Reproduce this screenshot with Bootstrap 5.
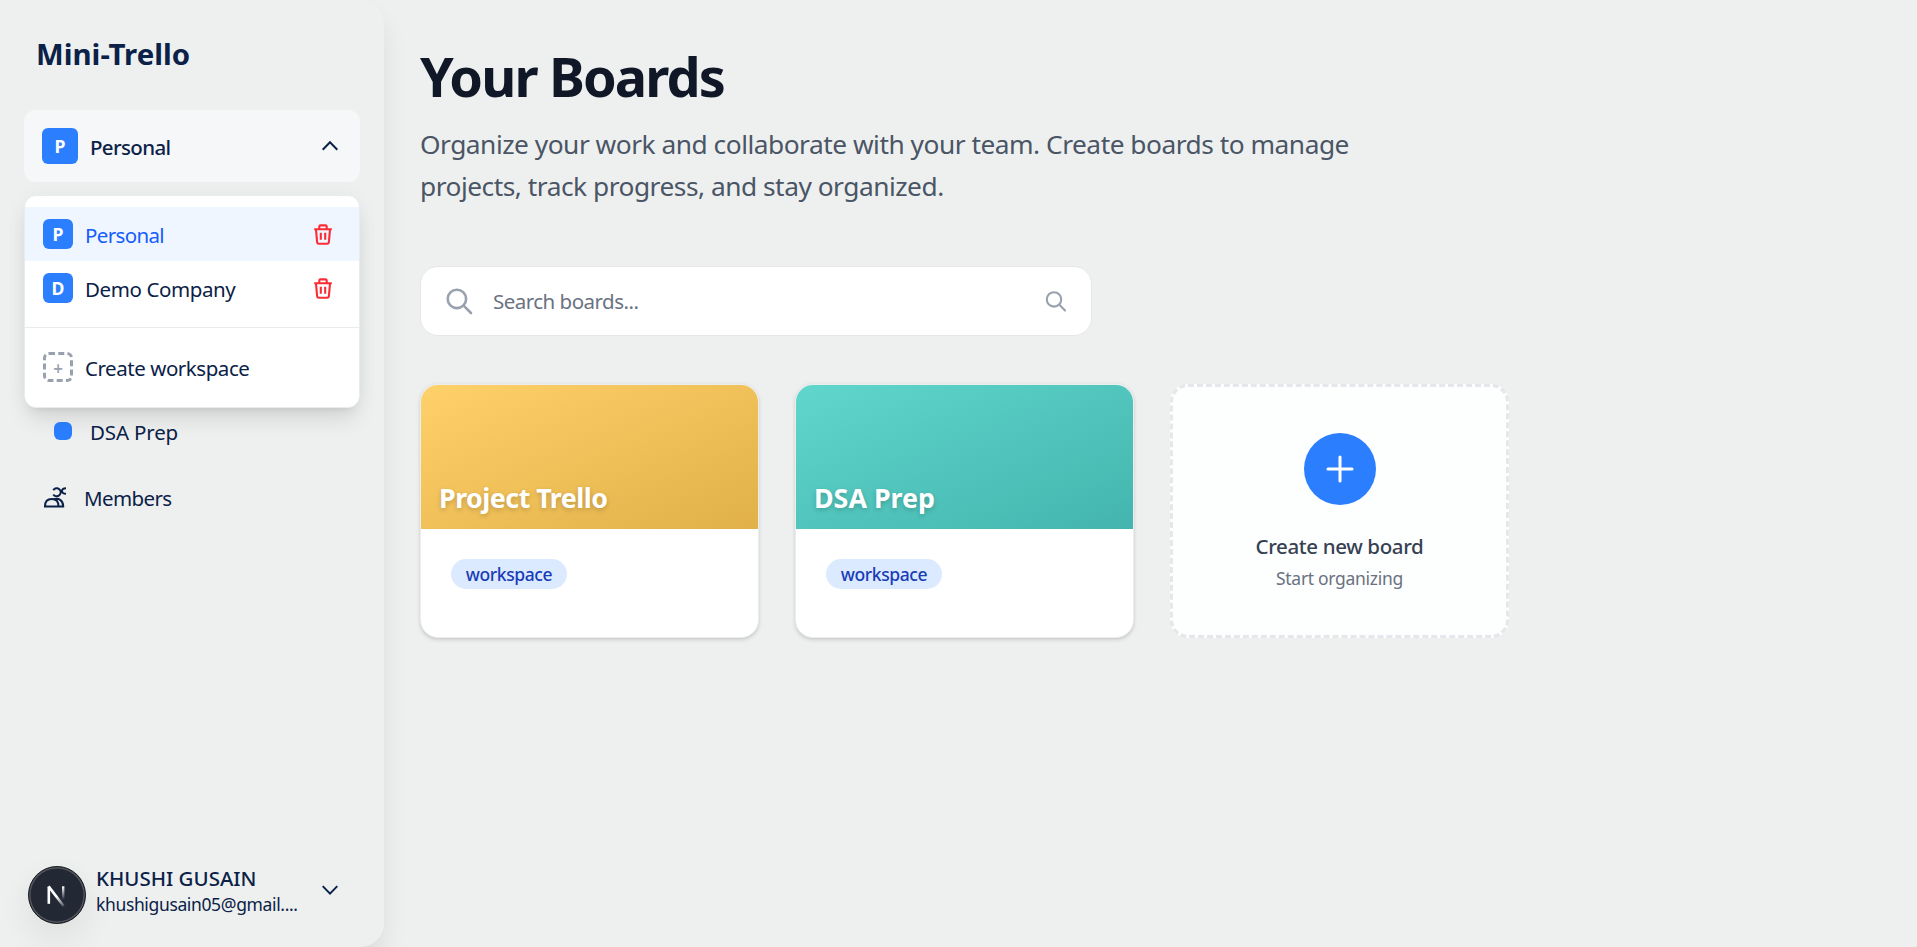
<!DOCTYPE html>
<html lang="en">
<head>
<meta charset="utf-8">
<meta name="viewport" content="width=device-width, initial-scale=1">
<title>Mini-Trello</title>
<link href="https://cdn.jsdelivr.net/npm/bootstrap@5.3.0/dist/css/bootstrap.min.css" rel="stylesheet">
<style>
  body { background: #eef0f0; color: #0b2147; font: 400 20.5px/30px "Noto Sans", "Open Sans", sans-serif; height: 947px; overflow: hidden; }
  svg { display: block; flex: none; }
  .sidebar { position: relative; width: 384px; height: 947px; flex: none; background: #eef0f0; border-radius: 0 24px 24px 0; box-shadow: 0 15px 26px rgba(0,0,0,.075); padding: 33px 24px 23px; }
  .brand { font-size: 29.4px; font-weight: 700; line-height: 42px; margin: 0 0 35px 12px; }
  .switcher { height: 72px; background: #f5f7f9; border-radius: 12px; padding: 0 22px 0 18px; border: 0; color: inherit; flex: none; }
  .name { padding-top: 2px; letter-spacing: -.45px; white-space: nowrap; }
  .name-personal { letter-spacing: -.65px; }
  .name-company { letter-spacing: -.4px; }
  .name-board { letter-spacing: -.15px; }
  .name-members { letter-spacing: -.6px; }
  .medium { font-weight: 500; }
  .tile { background: #2b7fff; color: #fff; font-weight: 700; font-size: 17.6px; line-height: 1; display: flex; align-items: center; justify-content: center; border-radius: 6px; padding-top: 1px; flex: none; }
  .tile-lg { width: 36px; height: 36px; margin-right: 12px; }
  .tile-sm { width: 30px; height: 30px; }
  .ws-menu { position: absolute; left: 24px; top: 194.5px; width: 336px; height: 213px; z-index: 5; background: #fff; border: 1px solid #e9ebed; border-radius: 12px; padding: 11.5px 0; box-shadow: 0 15px 22px -4px rgba(0,0,0,.1), 0 6px 9px -6px rgba(0,0,0,.1), 0 0 22px rgba(0,0,0,.04); }
  .ws-row { height: 54px; padding: 0 26px 0 18px; gap: 12px; }
  .ws-row.current { background: #eff6ff; color: #155dfc; }
  .ws-rule { height: 1px; background: #e9ebee; margin: 12px 0; }
  .tile-dash { width: 30px; height: 30px; border: 3px dashed #99a1af; border-radius: 6px; color: #99a1af; font-size: 17px; font-weight: 600; line-height: 1; padding-top: 3px; flex: none; }
  .side-nav { margin-top: 222px; gap: 12px; }
  .nav-row { height: 54px; }
  .dot { width: 18px; height: 18px; border-radius: 6px; background: #2b7fff; margin: 0 18px 0 30px; }
  .members-icon { margin: 0 18px 0 20px; }
  .user { padding: 0 22px 0 4px; height: 58px; }
  .avatar { width: 58px; height: 58px; border-radius: 50%; background: #222834; border: 1.5px solid #1d1f22; box-shadow: inset 0 0 0 1.5px #55585f, 0 14px 30px 4px rgba(0,0,0,.055); flex: none; }
  .user-text { margin: -1px 0 0 10px; line-height: 26px; white-space: nowrap; align-self: flex-start; }
  .mail { font-size: 17.5px; letter-spacing: -.36px; }
  main { padding: 45.5px 36px 0; flex: 1; }
  h1.title { font-size: 54px; font-weight: 700; line-height: 60px; letter-spacing: -1.85px; color: #101828; margin: 0 0 17.5px; }
  .intro { font-size: 26.3px; line-height: 42px; letter-spacing: -.485px; color: #4a5565; margin: 0 0 59px; }
  .search { width: 672px; height: 70px; background: #fff; border: 1px solid #e5e7eb; border-radius: 18px; padding: 0 25px; color: #6a7282; margin-bottom: 48px; }
  .search .name { margin-left: 20px; padding-top: 0; letter-spacing: -.52px; }
  .boards { gap: 36px; }
  .board { width: 339px; height: 254px; border-radius: 18px; overflow: hidden; background: #fff; border: 1px solid #eceeee; box-shadow: 0 1.5px 4px rgba(0,0,0,.12), 0 1.5px 3px -1.5px rgba(0,0,0,.1); }
  .cover { height: 144px; padding: 0 18px 14.5px; color: #fff; font-size: 26.8px; font-weight: 700; line-height: 34px; text-shadow: 0 1.5px 5px rgba(0,0,0,.2); white-space: nowrap; }
  .cover-gold { background: linear-gradient(to bottom right, #ffd16a, #e1b048); letter-spacing: -.5px; }
  .cover-teal { background: linear-gradient(to bottom right, #60d6cc, #43b5ae); }
  .tag { display: block; width: 116px; height: 30px; margin: 30px; border-radius: 15px; background: #dbeafe; color: #193cb8; font-size: 17.5px; font-weight: 500; line-height: 31px; letter-spacing: -.4px; text-align: center; }
  .board-new { width: 339px; height: 254px; border-radius: 18px; border: 3px dashed #e5e7eb; background: #fdfefe; padding-top: 46px; }
  .plus { width: 72px; height: 72px; border-radius: 50%; background: #2b7fff; margin-bottom: 25.5px; }
  .new-title { color: #364153; letter-spacing: -.37px; font-weight: 500; }
  .new-sub { color: #6a7282; font-size: 17.5px; line-height: 27px; letter-spacing: -.3px; margin-top: 4px; }
</style>
</head>
<body>
<svg width="0" height="0" class="position-absolute">
  <symbol id="trash" viewBox="0 0 20 21"><path d="M1.2 5.2h17.6M6.3 5V2.6c0-.8.4-1.2 1.2-1.2h5c.8 0 1.2.4 1.2 1.2V5M3 5.4l1.1 12.7c.1 1 .7 1.6 1.7 1.6h8.4c1 0 1.6-.6 1.7-1.6L17 5.4M7.8 8.8v7M12.2 8.8v7" fill="none" stroke="#fb2c36" stroke-width="2.1"/></symbol>
</svg>
<div class="d-flex">
  <aside class="sidebar d-flex flex-column">
    <div class="brand">Mini-Trello</div>
    <button class="switcher d-flex align-items-center text-start">
      <span class="tile tile-lg">P</span>
      <span class="name name-personal medium flex-grow-1">Personal</span>
      <svg width="16" height="12" viewBox="0 0 16 12" fill="none" stroke="#0b2147" stroke-width="2"><path d="M.7 9.7 8 2.2l7.3 7.5"/></svg>
    </button>

    <div class="ws-menu">
      <div class="ws-row current d-flex align-items-center">
        <span class="tile tile-sm">P</span><span class="name name-personal flex-grow-1">Personal</span>
        <svg width="20" height="21"><use href="#trash"/></svg>
      </div>
      <div class="ws-row d-flex align-items-center">
        <span class="tile tile-sm">D</span><span class="name name-company flex-grow-1">Demo Company</span>
        <svg width="20" height="21"><use href="#trash"/></svg>
      </div>
      <div class="ws-rule"></div>
      <div class="ws-row d-flex align-items-center">
        <span class="tile-dash d-flex align-items-center justify-content-center">+</span><span class="name">Create workspace</span>
      </div>
    </div>

    <nav class="side-nav d-flex flex-column">
      <div class="nav-row d-flex align-items-center"><span class="dot"></span><span class="name name-board">DSA Prep</span></div>
      <div class="nav-row d-flex align-items-center">
        <svg class="members-icon" width="22" height="21" viewBox="0 0 22 21" fill="none" stroke="#0b2147" stroke-width="2"><path d="M1 19.4C1 14.4 3.8 12 7.8 12s6.7 2.4 6.7 7.4M0 19.4h20.2M9.8 12.3c5.2-1.6 9.4 1.4 9.4 7.1M9.3 3.2a4 4 0 1 1 0 4.2M22 1.2c-5.4.2-5.4 5.6 0 5.6"/></svg>
        <span class="name name-members">Members</span>
      </div>
    </nav>

    <div class="user d-flex align-items-center mt-auto">
      <div class="avatar">
        <svg width="55" height="55" viewBox="0 0 55 55">
          <defs>
            <linearGradient id="stem" x1="0" y1="0" x2="0" y2="1"><stop stop-color="#fff"/><stop offset="1" stop-color="#fff" stop-opacity="0"/></linearGradient>
            <linearGradient id="slash" gradientUnits="userSpaceOnUse" x1="28" y1="29" x2="36" y2="40"><stop stop-color="#fff"/><stop offset="1" stop-color="#fff" stop-opacity=".1"/></linearGradient>
          </defs>
          <path d="M19.8 36.8V19.6" stroke="#fff" stroke-width="2.6"/>
          <path d="M19.6 19.4 34.6 39" stroke="url(#slash)" stroke-width="2.6"/>
          <path d="M33 19.3h2.4v13.5H33z" fill="url(#stem)"/>
        </svg>
      </div>
      <div class="user-text flex-grow-1"><div class="medium">KHUSHI GUSAIN</div><div class="mail">khushigusain05@gmail....</div></div>
      <svg width="16" height="12" viewBox="0 0 16 12" class="mb-2" fill="none" stroke="#0b2147" stroke-width="2"><path d="M.7 1.1 8 8.6l7.3-7.5"/></svg>
    </div>
  </aside>

  <main>
    <h1 class="title">Your Boards</h1>
    <p class="intro">Organize your work and collaborate with your team. Create boards to manage<br>projects, track progress, and stay organized.</p>

    <div class="search d-flex align-items-center">
      <svg width="27" height="27" viewBox="0 0 27 27" fill="none" stroke="#99a1af" stroke-width="2.6" stroke-linecap="round"><circle cx="10.9" cy="10.9" r="9.2"/><path d="m17.6 17.6 7.4 7.4"/></svg>
      <span class="name flex-grow-1">Search boards...</span>
      <svg width="21" height="21" viewBox="0 0 21 21" fill="none" stroke="#99a1af" stroke-width="2.1" stroke-linecap="round"><circle cx="9" cy="8.4" r="7.2"/><path d="m14.4 13.8 5.6 5.8"/></svg>
    </div>

    <div class="boards d-flex">
      <article class="board">
        <div class="cover cover-gold d-flex align-items-end">Project Trello</div>
        <span class="tag">workspace</span>
      </article>
      <article class="board">
        <div class="cover cover-teal d-flex align-items-end">DSA Prep</div>
        <span class="tag">workspace</span>
      </article>
      <article class="board-new d-flex flex-column align-items-center">
        <div class="plus d-flex align-items-center justify-content-center">
          <svg width="28" height="28" viewBox="0 0 28 28" stroke="#fff" stroke-width="3" stroke-linecap="round"><path d="M14 2v24M2 14h24"/></svg>
        </div>
        <div class="new-title">Create new board</div>
        <div class="new-sub">Start organizing</div>
      </article>
    </div>
  </main>
</div>
<script src="https://cdn.jsdelivr.net/npm/bootstrap@5.3.0/dist/js/bootstrap.bundle.min.js"></script>
</body>
</html>
